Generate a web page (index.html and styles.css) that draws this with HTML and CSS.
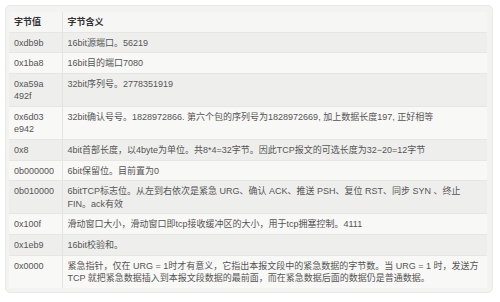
FILE: index.html
```html
<!DOCTYPE html>
<html lang="zh">
<head>
<meta charset="utf-8">
<link rel="stylesheet" href="styles.css">
</head>
<body>
<div class="card">
  <table class="tbl">
    <colgroup><col class="c1"><col class="c2"></colgroup>
    <thead>
      <tr><th>字节值</th><th>字节含义</th></tr>
    </thead>
    <tbody>
      <tr><td>0xdb9b</td><td>16bit源端口。56219</td></tr>
      <tr><td>0x1ba8</td><td>16bit目的端口7080</td></tr>
      <tr><td>0xa59a 492f</td><td>32bit序列号。2778351919</td></tr>
      <tr><td>0x6d03 e942</td><td>32bit确认号号。1828972866. 第六个包的序列号为1828972669, 加上数据长度197, 正好相等</td></tr>
      <tr><td>0x8</td><td>4bit首部长度，以4byte为单位。共8*4=32字节。因此TCP报文的可选长度为32−20=12字节</td></tr>
      <tr><td>0b000000</td><td>6bit保留位。目前置为0</td></tr>
      <tr><td>0b010000</td><td>6bitTCP标志位。从左到右依次是紧急 URG、确认 ACK、推送 PSH、复位 RST、同步 SYN 、终止 FIN。ack有效</td></tr>
      <tr><td>0x100f</td><td>滑动窗口大小，滑动窗口即tcp接收缓冲区的大小，用于tcp拥塞控制。4111</td></tr>
      <tr><td>0x1eb9</td><td>16bit校验和。</td></tr>
      <tr><td>0x0000</td><td>紧急指针，仅在 URG = 1时才有意义，它指出本报文段中的紧急数据的字节数。当 URG = 1 时，发送方 TCP 就把紧急数据插入到本报文段数据的最前面，而在紧急数据后面的数据仍是普通数据。</td></tr>
    </tbody>
  </table>
</div>
</body>
</html>
```
FILE: styles.css
```css
html, body {
  margin: 0;
  padding: 0;
  background: #ffffff;
}
body {
  font-family: "Liberation Sans", "Noto Sans CJK SC", sans-serif;
  font-size: 9px;
  color: #555;
}
.card {
  margin: 5px 7px 0 5px;
  padding: 6px 5px 4px 3px;
  background: #f3f4f2;
  border: 1px solid #e9eae8;
  border-radius: 5px;
  box-sizing: border-box;
  width: 488px;
}
.tbl {
  width: 100%;
  border-collapse: collapse;
  table-layout: fixed;
  line-height: 12.3px;
}
.c1 { width: 53px; }
.tbl th, .tbl td {
  padding: 4px 5px 3.4px;
  text-align: left;
  vertical-align: top;
  border-bottom: 1px solid #e6e7e5;
}
.tbl th:first-child, .tbl td:first-child {
  border-right: 1px solid #e3e4e2;
}
.tbl th {
  font-weight: bold;
  color: #333;
  background: #f6f7f5;
}
.tbl tbody tr:nth-child(odd) td { background: #eeefed; }
.tbl tbody tr:nth-child(even) td { background: #f8f8f6; }
.tbl tbody tr:last-child td { border-bottom: none; }
```
